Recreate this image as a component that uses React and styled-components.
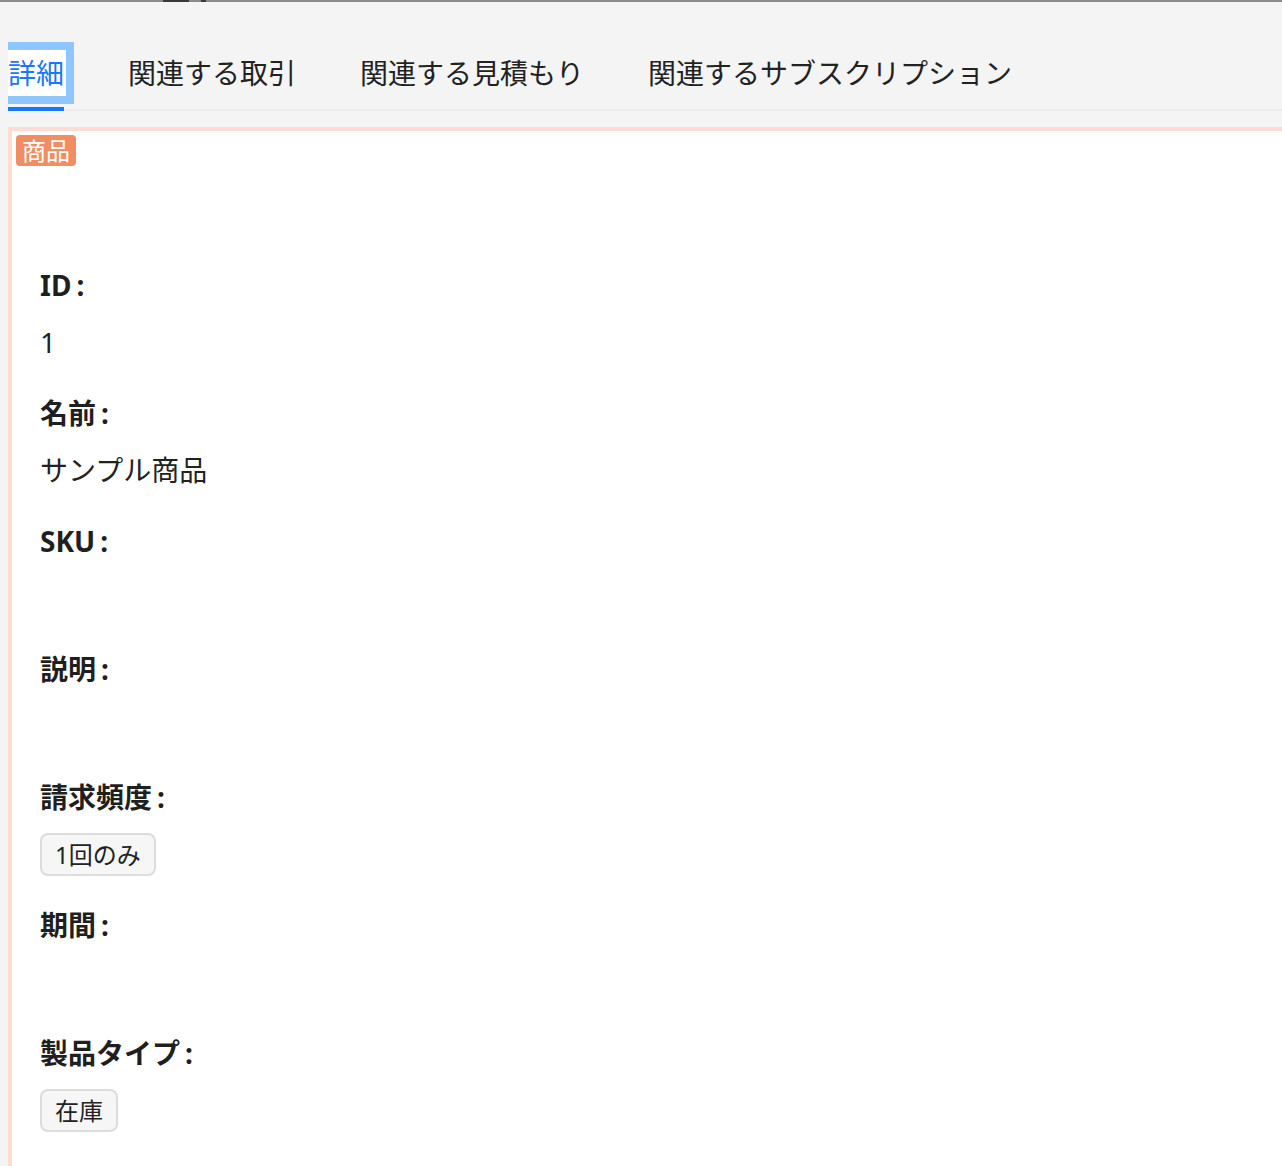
import React from "react";
import styled, { createGlobalStyle } from "styled-components";

const Global = createGlobalStyle`
  html, body {
    margin: 0;
    padding: 0;
    background: #f4f4f4;
    overflow-x: hidden;
  }
  body {
    font-family: "Noto Sans", "Noto Sans CJK JP", sans-serif;
    color: #222;
  }
`;

const Page = styled.div`
  min-height: 1166px;
  background: #f4f4f4;
`;

const TopEdge = styled.div`
  height: 2px;
  background: #8a8a8a;
  display: flex;
`;

const EdgeMark = styled.span`
  display: block;
  height: 2px;
  margin-left: ${(p) => p.$offset}px;
  width: ${(p) => p.$w}px;
  background: #3a3a3a;
`;

const Header = styled.div`
  padding-left: 8px;
`;

const TabBar = styled.div`
  margin-top: 48px;
  display: flex;
  align-items: flex-end;
  gap: 64px;
  border-bottom: 2px solid #ececec;
`;

const Tab = styled.div`
  font-size: 28px;
  color: ${(p) => (p.$active ? "#1677ff" : "#222")};
  padding-bottom: 11px;
  border-bottom: 4px solid ${(p) => (p.$active ? "#1677ff" : "transparent")};
  margin-bottom: -2px;
  white-space: nowrap;
  cursor: pointer;
`;

const TabLabel = styled.span`
  display: block;
  line-height: 46px;
  ${(p) =>
    p.$focused &&
    `
    background: #ffffff;
    padding-right: 2px;
    margin-right: -2px;
    box-shadow: 0 0 0 8px #90c6ff;
    clip-path: inset(-8px -8px -8px 0);
  `}
`;

const Card = styled.div`
  margin: 16px -40px 0 8px;
  border-top: 4px solid #fcdcd3;
  border-left: 4px solid #fcdcd3;
  background: #ffffff;
  padding-bottom: 60px;
`;

const Badge = styled.span`
  display: inline-block;
  margin: 4px 0 0 4px;
  padding: 0 6px;
  background: #f08d63;
  color: #ffffff;
  font-size: 24px;
  line-height: 31px;
  border-radius: 4px;
`;

const Fields = styled.dl`
  margin: 98px 0 0;
  padding-left: 28px;
`;

const Label = styled.dt`
  font-size: 28px;
  font-weight: 700;
  line-height: 42px;
  color: #1f1f1f;
  margin: 0 0 15px;
`;

const Colon = styled.span`
  margin-left: 5px;
`;

const Value = styled.dd`
  margin: 0 0 28px;
  min-height: 43px;
  font-size: 28px;
  line-height: 43px;
  color: #222;
`;

const Chip = styled.span`
  display: inline-block;
  vertical-align: top;
  box-sizing: border-box;
  height: 43px;
  line-height: 39px;
  padding: 0 13px;
  border: 2px solid #dcdcdc;
  border-radius: 8px;
  background: #f6f6f6;
  font-size: 24px;
  color: #222;
`;

const tabs = ["詳細", "関連する取引", "関連する見積もり", "関連するサブスクリプション"];

const fields = [
  { label: "ID", value: "1" },
  { label: "名前", value: "サンプル商品" },
  { label: "SKU", value: "" },
  { label: "説明", value: "" },
  { label: "請求頻度", chip: "1回のみ" },
  { label: "期間", value: "" },
  { label: "製品タイプ", chip: "在庫" },
];

export default function App() {
  return (
    <Page>
      <Global />
      <TopEdge>
        <EdgeMark $offset={163} $w={26} />
        <EdgeMark $offset={12} $w={5} />
      </TopEdge>
      <Header>
        <TabBar>
          {tabs.map((t, i) => (
            <Tab key={t} $active={i === 0}>
              <TabLabel $focused={i === 0}>{t}</TabLabel>
            </Tab>
          ))}
        </TabBar>
      </Header>
      <Card>
        <Badge>商品</Badge>
        <Fields>
          {fields.map((f) => (
            <React.Fragment key={f.label}>
              <Label>
                {f.label}
                <Colon>:</Colon>
              </Label>
              <Value>{f.chip ? <Chip>{f.chip}</Chip> : f.value}</Value>
            </React.Fragment>
          ))}
        </Fields>
      </Card>
    </Page>
  );
}
